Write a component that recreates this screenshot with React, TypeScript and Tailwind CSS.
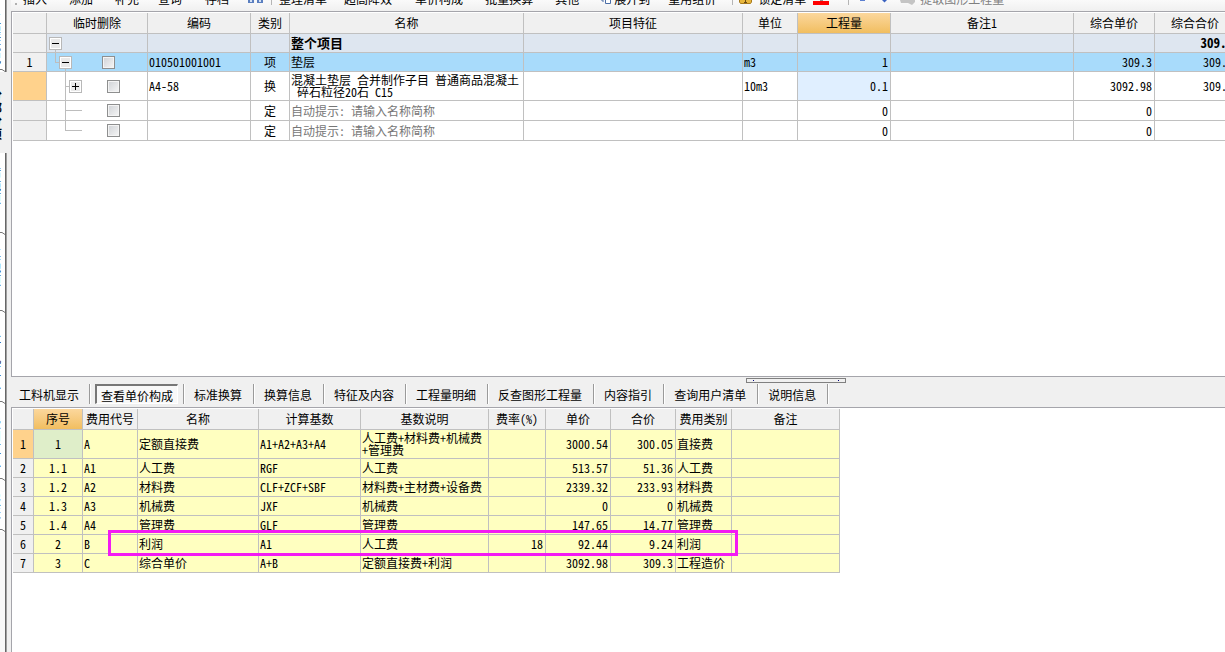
import clsx from "clsx"
import { useState } from "react"

interface SideTab {
  label: string
  height: string
}

const sideTabs: SideTab[] = [
  { label: "工程概况", height: "h-[72px]" },
  { label: "分部分项", height: "h-[81px]" },
  { label: "措施项目", height: "h-[82px]" },
  { label: "其他项目", height: "h-[78px]" },
  { label: "人材机汇总", height: "h-[91px]" },
  { label: "费用汇总", height: "h-[77px]" },
  { label: "报表", height: "h-[51px]" },
]

interface TreeRow {
  index: string
  level: number
  toggle?: "open" | "closed"
  last?: boolean
  height: number
  rowClass: string
  code: string
  kind: string
  name: string
  unit: string
  amount: string
  price: string
  total: string
}

const treeRows: TreeRow[] = [
  {
    index: "",
    level: 0,
    toggle: "open",
    height: 18,
    rowClass: "h-[19px] bg-[#dee6f0] text-[13px] font-bold",
    code: "",
    kind: "",
    name: "整个项目",
    unit: "",
    amount: "",
    price: "",
    total: "309.3",
  },
  {
    index: "1",
    level: 1,
    toggle: "open",
    last: true,
    height: 18,
    rowClass: "h-[19px] bg-[#a8dbfb]",
    code: "010501001001",
    kind: "项",
    name: "垫层",
    unit: "m3",
    amount: "1",
    price: "309.3",
    total: "309.3",
  },
  {
    index: "",
    level: 2,
    toggle: "closed",
    height: 28,
    rowClass: "h-[29px]",
    code: "A4-58",
    kind: "换",
    name: "混凝土垫层 合并制作子目 普通商品混凝土\n 碎石粒径20石 C15",
    unit: "10m3",
    amount: "0.1",
    price: "3092.98",
    total: "309.3",
  },
  {
    index: "",
    level: 2,
    height: 19,
    rowClass: "h-[20px]",
    code: "",
    kind: "定",
    name: "",
    unit: "",
    amount: "0",
    price: "0",
    total: "",
  },
  {
    index: "",
    level: 2,
    last: true,
    height: 19,
    rowClass: "h-[20px]",
    code: "",
    kind: "定",
    name: "",
    unit: "",
    amount: "0",
    price: "0",
    total: "",
  },
]

const treeColumns = [
  { title: "", width: "w-[34px]" },
  { title: "临时删除", width: "w-[101px]" },
  { title: "编码", width: "w-[103px]" },
  { title: "类别", width: "w-[39px]" },
  { title: "名称", width: "w-[234px]" },
  { title: "项目特征", width: "w-[219px]" },
  { title: "单位", width: "w-[55px]" },
  { title: "工程量", width: "w-[93px]" },
  { title: "备注1", width: "w-[183px]" },
  { title: "综合单价", width: "w-[81px]" },
  { title: "综合合价", width: "w-[81px]" },
]

const feeColumns = [
  { title: "", width: "w-[21px]" },
  { title: "序号", width: "w-[49px]" },
  { title: "费用代号", width: "w-[55px]" },
  { title: "名称", width: "w-[121px]" },
  { title: "计算基数", width: "w-[102px]" },
  { title: "基数说明", width: "w-[128px]" },
  { title: "费率(%)", width: "w-[57px]" },
  { title: "单价", width: "w-[65px]" },
  { title: "合价", width: "w-[65px]" },
  { title: "费用类别", width: "w-[56px]" },
  { title: "备注", width: "w-[108px]" },
]

// no, code, name, base, description, rate, price, total, category
const feeRows = [
  ["1", "A", "定额直接费", "A1+A2+A3+A4", "人工费+材料费+机械费\n+管理费", "", "3000.54", "300.05", "直接费"],
  ["1.1", "A1", "人工费", "RGF", "人工费", "", "513.57", "51.36", "人工费"],
  ["1.2", "A2", "材料费", "CLF+ZCF+SBF", "材料费+主材费+设备费", "", "2339.32", "233.93", "材料费"],
  ["1.3", "A3", "机械费", "JXF", "机械费", "", "0", "0", "机械费"],
  ["1.4", "A4", "管理费", "GLF", "管理费", "", "147.65", "14.77", "管理费"],
  ["2", "B", "利润", "A1", "人工费", "18", "92.44", "9.24", "利润"],
  ["3", "C", "综合单价", "A+B", "定额直接费+利润", "", "3092.98", "309.3", "工程造价"],
]

const detailTabs = [
  "工料机显示",
  "查看单价构成",
  "标准换算",
  "换算信息",
  "特征及内容",
  "工程量明细",
  "反查图形工程量",
  "内容指引",
  "查询用户清单",
  "说明信息",
]

const cell = "overflow-hidden border-r border-b border-[#c0c0c0] p-0 whitespace-pre"
const headCell = "border-r border-b border-[#c0c0c0] p-0 font-normal whitespace-nowrap"
const activeHead = "bg-linear-to-b from-[#fbd79c] to-[#f1be5f]"

const SideBar = () => (
  <nav className="flex w-[7px] shrink-0 flex-col overflow-hidden">
    {sideTabs.map(({ label, height }, i) => (
      <button
        key={label}
        className={clsx(
          "flex w-[6px] shrink-0 flex-col justify-between",
          height,
          i === 1
            ? "font-bold"
            : "border-r border-[#666666] bg-white shadow-[1px_0_0_#a0a0a0]",
        )}
      >
        <span
          className={clsx(
            "block w-3 text-left leading-[13px] break-all",
            i === 1 ? "mt-4 -ml-[10px]" : "mt-3 -ml-[11px]",
          )}
        >
          {label}
        </span>
        {i !== 1 && (
          <svg width="6" height="3" className="-mt-[3px] block shrink-0">
            <path d="M0 .5h2l3 2" fill="none" stroke="#777" />
          </svg>
        )}
      </button>
    ))}
    <div className="w-[6px] flex-1 border-r border-[#666666] bg-[#f8f8f8] shadow-[1px_0_0_#a0a0a0]" />
  </nav>
)

const ToolSeparator = ({ className }: { className: string }) => (
  <span className={clsx("h-[5px] w-px shrink-0 self-start bg-[#b5b5b5]", className)} />
)

const ToolButton = ({ label, className }: { label: string; className: string }) => (
  <button className={clsx("shrink-0 leading-3 whitespace-nowrap", className)}>{label}</button>
)

const Toolbar = () => (
  <div className="flex h-[11px] items-end overflow-hidden bg-linear-to-b from-[#fafafa] to-[#f0f0f0] pb-[6px] pl-1">
    <span className="mr-[6px] size-[2px] shrink-0 bg-[#b0b0b0]" />
    <ToolButton label="插入" className="mr-[22px]" />
    <ToolButton label="添加" className="mr-[22px]" />
    <ToolButton label="补充" className="mr-[19px]" />
    <ToolButton label="查询" className="mr-[23px]" />
    <ToolButton label="存档" className="mr-[19px]" />
    <svg width="16" height="8" className="mr-[7px] block shrink-0 self-start">
      <path d="M0 0h6v3H0zM9 0h6v3H9z" fill="#5b7fc0" />
      <path d="M2 0h2v2H2zM11 0h2v2h-2z" fill="#d5e2f5" />
    </svg>
    <ToolSeparator className="mr-[7px]" />
    <ToolButton label="整理清单" className="mr-[17px]" />
    <ToolButton label="超高降效" className="mr-[23px]" />
    <ToolButton label="单价构成" className="mr-[22px]" />
    <ToolButton label="批量换算" className="mr-[22px]" />
    <ToolButton label="其他" className="mr-[22px]" />
    <svg width="10" height="5" className="mr-[3px] block shrink-0 self-start">
      <path d="M1 0v1h2M4.500 0v3.500h5V0" fill="#fff" stroke="#4c6fa8" />
    </svg>
    <ToolButton label="展开到" className="mr-[18px]" />
    <ToolButton label="重用组价" className="mr-[16px]" />
    <ToolSeparator className="mr-[6px]" />
    <svg width="13" height="5" className="mr-[6px] block shrink-0 self-start">
      <path d="M.5-1v3l1 1.500h10l1-1.500v-3z" fill="#e8b63c" stroke="#a87b1e" />
      <path d="M5 2.500h3M6.500 0v2" stroke="#6b4a10" />
    </svg>
    <ToolButton label="锁定清单" className="mr-[7px]" />
    <svg width="16" height="6" className="mr-[19px] block shrink-0 self-start">
      <path d="M7 0h3" stroke="#222" />
      <path d="M0 1h16v4H0z" fill="#f00" />
    </svg>
    <ToolSeparator className="mr-[11px]" />
    <svg width="27" height="5" className="mr-[13px] block shrink-0 self-start">
      <path d="M0 0h5v1H0z" fill="#5b7fd0" />
      <path d="M22 0h5l-2.500 2.500z" fill="#3a62c0" />
    </svg>
    <svg width="16" height="6" className="mr-1 block shrink-0 self-start">
      <path d="M0 0h8v3H1zM8 0h7v2l-3 3-4-2z" fill="#c4c4c4" />
    </svg>
    <ToolButton label="提取图形工程量" className="text-[#808080]" />
  </div>
)

const TreeGuide = ({ row }: { row: TreeRow }) => {
  const mid = Math.floor(row.height / 2)
  const center = 8 + row.level * 10
  const parent = center - 10
  return (
    <svg width="36" height={row.height} className="block overflow-visible" shapeRendering="crispEdges">
      <g fill="#bdbdbd">
        {row.level > 0 && (
          <>
            <rect x={parent} y="-1" width="1" height={row.last ? mid + 2 : row.height + 2} />
            <rect x={parent} y={mid} width={row.toggle ? 4 : 17} height="1" />
          </>
        )}
        {row.toggle === "open" && (
          <rect x={center} y={mid + 7} width="1" height={row.height - mid - 6} />
        )}
      </g>
      {row.toggle && (
        <g transform={`translate(${center - 6} ${mid - 6})`}>
          <rect width="13" height="13" fill="#b8b8b8" />
          <rect x="1" y="1" width="11" height="11" fill="#fff" />
          <rect x="2" y="2" width="9" height="9" fill="#e9e9e9" />
          <rect x="3" y="6" width="7" height="1" fill="#000" />
          {row.toggle === "closed" && <rect x="6" y="3" width="1" height="7" fill="#000" />}
        </g>
      )}
    </svg>
  )
}

const ProjectTable = () => (
  <table className="w-[1223px] table-fixed border-separate border-spacing-0 leading-3">
    <thead>
      <tr className="h-[21px] bg-[#f0f0f0]">
        {treeColumns.map(({ title, width }) => (
          <th key={title} className={clsx(headCell, width, title === "工程量" && activeHead)}>
            {title}
          </th>
        ))}
      </tr>
    </thead>
    <tbody>
      {treeRows.map((row, i) => (
        <tr key={i} className={row.rowClass}>
          <td className={clsx(cell, "text-center", i === 2 ? "bg-[#ffd28c]" : "bg-[#f0f0f0]")}>
            {row.index}
          </td>
          <td className={cell}>
            <div className="flex items-center">
              {row.toggle ? (
                <button aria-label="展开">
                  <TreeGuide row={row} />
                </button>
              ) : (
                <TreeGuide row={row} />
              )}
              {row.level > 0 && (
                <input
                  type="checkbox"
                  aria-label="临时删除"
                  className={clsx(
                    "size-[13px] appearance-none border border-[#8e8f8f] bg-linear-to-br from-[#cfd2d6] to-[#f6f6f6] shadow-[inset_0_0_0_1px_#f4f4f4] checked:bg-[#4b6ea8]",
                    row.level === 1 ? "ml-[19px]" : "ml-6",
                  )}
                />
              )}
            </div>
          </td>
          <td className={clsx(cell, "pl-px")}>{row.code}</td>
          <td className={clsx(cell, "text-center")}>{row.kind}</td>
          <td className={clsx(cell, "pl-px")}>
            {row.name || <span className="text-[#777777]">自动提示: 请输入名称简称</span>}
          </td>
          <td className={cell} />
          <td className={clsx(cell, "pl-px")}>{row.unit}</td>
          <td className={clsx(cell, "pr-[2px] text-right", i === 2 && "bg-[#e0efff]")}>
            {row.amount}
          </td>
          <td className={cell} />
          <td className={clsx(cell, "pr-[2px] text-right")}>{row.price}</td>
          <td className={clsx(cell, "pr-[2px] text-right")}>{row.total}</td>
        </tr>
      ))}
    </tbody>
  </table>
)

const DetailTabs = () => {
  const [active, setActive] = useState("查看单价构成")

  return (
    <div className="flex h-[24px] items-start pt-px">
      {detailTabs.map((tab, i) => (
        <div
          key={tab}
          className="flex h-5 items-center border-r border-[#9a9a9a] px-1 shadow-[1px_0_0_#fff]"
        >
          <button
            onClick={() => setActive(tab)}
            className={clsx(
              "h-5 whitespace-nowrap",
              tab === active
                ? "mx-px border-t-2 border-r border-b border-l-2 border-t-[#777777] border-r-white border-b-white border-l-[#777777] bg-[#f8f8f8] px-1 leading-5"
                : i === 0
                  ? "px-1 pr-[6px] leading-[22px]"
                  : "px-[6px] leading-[22px]",
            )}
          >
            {tab}
          </button>
          {i > 0 && tab !== active && <span className="w-px" />}
        </div>
      ))}
    </div>
  )
}

const FeeTable = () => (
  <table className="w-[827px] table-fixed border-separate border-spacing-0 leading-3">
    <thead>
      <tr className="h-[21px] bg-[#f0f0f0]">
        {feeColumns.map(({ title, width }) => (
          <th key={title} className={clsx(headCell, width, title === "序号" && activeHead)}>
            {title}
          </th>
        ))}
      </tr>
    </thead>
    <tbody>
      {feeRows.map(([no, code, name, base, description, rate, price, total, category], i) => (
        <tr key={no} className={clsx("bg-[#ffffc0]", i === 0 ? "h-[29px]" : "h-[19px]")}>
          <td className={clsx(cell, "text-center", i === 0 ? "bg-[#ffd28c]" : "bg-[#f0f0f0]")}>
            {i + 1}
          </td>
          <td className={clsx(cell, "text-center", i === 0 && "bg-[#dfeec9]")}>{no}</td>
          <td className={clsx(cell, "pl-px")}>{code}</td>
          <td className={clsx(cell, "pl-px")}>{name}</td>
          <td className={clsx(cell, "pl-px")}>{base}</td>
          <td className={clsx(cell, "pl-px")}>{description}</td>
          <td className={clsx(cell, "pr-[2px] text-right")}>{rate}</td>
          <td className={clsx(cell, "pr-[2px] text-right")}>{price}</td>
          <td className={clsx(cell, "pr-[2px] text-right")}>{total}</td>
          <td className={clsx(cell, "pl-px")}>{category}</td>
          <td className={cell} />
        </tr>
      ))}
    </tbody>
  </table>
)

const App = () => (
  <div className="flex h-screen overflow-hidden bg-[#f0f0f0] font-['Noto_Sans_Mono_CJK_SC','Noto_Sans_CJK_SC',sans-serif] text-[12px] text-black">
    <SideBar />
    <main className="ml-1 flex min-w-0 flex-1 flex-col">
      <Toolbar />
      <section className="h-[366px] shrink-0 overflow-hidden border-y border-l border-[#a5a5ab] bg-white pt-px pl-px">
        <ProjectTable />
      </section>
      <div className="h-[6px] shrink-0 pt-px">
        <div className="ml-[735px] flex h-[5px] w-[100px] items-center justify-between border border-[#808080] px-[6px]">
          <span className="size-px bg-[#000080]" />
          <span className="size-px bg-[#000080]" />
        </div>
      </div>
      <DetailTabs />
      <section className="flex-1 overflow-hidden border-t border-l border-[#a5a5ab] bg-white pt-px pl-px">
        <div className="relative">
          <FeeTable />
          {/* highlight around the profit row */}
          <div className="pointer-events-none absolute top-[121px] left-[95px] h-[26px] w-[630px] border-3 border-[#f31af3]" />
        </div>
      </section>
    </main>
  </div>
)

export default App
